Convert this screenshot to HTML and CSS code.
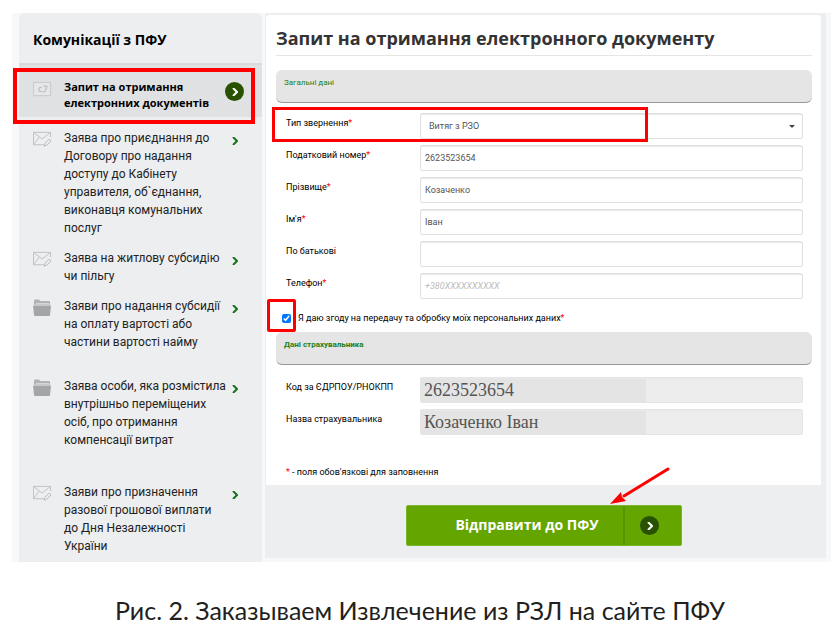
FILE: index.html
```html
<!DOCTYPE html>
<html lang="uk">
<head>
<meta charset="utf-8">
<title>Запит на отримання електронного документу</title>
<link rel="stylesheet" href="styles.css">
</head>
<body>
<svg class="defs" width="0" height="0">
    <symbol id="mail" viewBox="0 0 20 16">
        <path d="M11 13.500H.5V.5h18v5M.5.5l9 7 9-7M.5 13.500l6-8" fill="none" stroke="#bfc1c3"/>
        <path d="M11.500 15l1-3 4.500-4.500 2 2-4.500 4.500z" fill="#edeef0" stroke="#b5b7b9"/>
    </symbol>
    <symbol id="folder" viewBox="0 0 20 18">
        <path d="M1 6V1.500Q1 .5 2 .5h4l2 1.500h9q1 0 1 1V6z" fill="#b1b3b4"/>
        <path d="M3 5h14" stroke="#e1e2e3" fill="none"/>
        <path d="M0 7h19l-1 10q0 1-1 1H2q-1 0-1-1z" fill="#a3a5a6"/>
    </symbol>
    <symbol id="doc" viewBox="0 0 20 16">
        <path d="M.5.5h18v14H.5z" fill="#e6e7e8" stroke="#c6c8ca"/>
        <path d="M9 6Q6 5 6 8q0 3 3 2M11 4.500h4q-1 1-1.500 4-.5 3-3.500 2" fill="none" stroke="#aeb0b2"/>
    </symbol>
    <symbol id="chevron" viewBox="0 0 6 8">
        <path d="M1 0l4 4-4 4" fill="none" stroke="currentColor" stroke-width="2"/>
    </symbol>
</svg>

<div class="page">
    <aside class="sidebar">
        <h2>Комунікації з ПФУ</h2>
        <ul class="menu">
            <li class="active">
                <a href="#"><svg class="icon"><use href="#doc"/></svg><span>Запит на отримання<br>електронних документів</span><i class="round"><svg class="chevron"><use href="#chevron"/></svg></i></a>
                <div class="mark mark-menu"></div>
            </li>
            <li><a href="#"><svg class="icon"><use href="#mail"/></svg><span>Заява про приєднання до<br>Договору про надання<br>доступу до Кабінету<br>управителя, об`єднання,<br>виконавця комунальних<br>послуг</span><svg class="chevron"><use href="#chevron"/></svg></a></li>
            <li><a href="#"><svg class="icon"><use href="#mail"/></svg><span>Заява на житлову субсидію<br>чи пільгу</span><svg class="chevron"><use href="#chevron"/></svg></a></li>
            <li class="wide"><a href="#"><svg class="icon"><use href="#folder"/></svg><span>Заяви про надання субсидії<br>на оплату вартості або<br>частини вартості найму</span><svg class="chevron"><use href="#chevron"/></svg></a></li>
            <li class="wider"><a href="#"><svg class="icon"><use href="#folder"/></svg><span>Заява особи, яка розмістила<br>внутрішньо переміщених<br>осіб, про отримання<br>компенсації витрат</span><svg class="chevron"><use href="#chevron"/></svg></a></li>
            <li><a href="#"><svg class="icon"><use href="#mail"/></svg><span>Заяви про призначення<br>разової грошової виплати<br>до Дня Незалежності<br>України</span><svg class="chevron"><use href="#chevron"/></svg></a></li>
        </ul>
    </aside>

    <form class="main">
        <div class="card">
            <h1>Запит на отримання електронного документу</h1>

            <h3 class="section">Загальні дані</h3>
            <div class="rows">
                <div class="row">
                    <label for="type">Тип звернення<b>*</b></label>
                    <div class="select">
                        <select id="type"><option>Витяг з РЗО</option></select>
                    </div>
                    <div class="mark mark-type"></div>
                </div>
                <div class="row">
                    <label for="tax">Податковий номер<b>*</b></label>
                    <input id="tax" type="text" value="2623523654">
                </div>
                <div class="row">
                    <label for="surname">Прізвище<b>*</b></label>
                    <input id="surname" type="text" value="Козаченко">
                </div>
                <div class="row">
                    <label for="name">Ім'я<b>*</b></label>
                    <input id="name" type="text" value="Іван">
                </div>
                <div class="row">
                    <label for="patronymic">По батькові</label>
                    <input id="patronymic" type="text">
                </div>
                <div class="row">
                    <label for="phone">Телефон<b>*</b></label>
                    <input id="phone" type="tel" placeholder="+380XXXXXXXXXX">
                </div>
            </div>

            <div class="agree">
                <input id="agree" type="checkbox" checked>
                <label for="agree">Я даю згоду на передачу та обробку моїх персональних даних<b>*</b></label>
                <div class="mark mark-agree"></div>
            </div>

            <h3 class="section bold">Дані страхувальника</h3>
            <div class="rows insurer">
                <div class="row">
                    <label for="code">Код за ЄДРПОУ/РНОКПП</label>
                    <input id="code" class="locked" type="text" value="2623523654" readonly>
                </div>
                <div class="row">
                    <label for="insurer">Назва страхувальника</label>
                    <input id="insurer" class="locked" type="text" value="Козаченко Іван" readonly>
                </div>
            </div>

            <p class="note"><b>*</b> - поля обов'язкові для заповнення</p>
        </div>

        <div class="actions">
            <button type="button" class="send">
                <span class="send-text">Відправити до ПФУ</span>
                <span class="send-icon"><i class="round"><svg class="chevron"><use href="#chevron"/></svg></i></span>
            </button>
            <svg class="arrow" viewBox="0 0 60 40">
                <path d="M58 2L14 29" stroke="#f00" stroke-width="3" stroke-linecap="round"/>
                <path d="M0 37l11-12 1 5 4 4z" fill="#f00"/>
            </svg>
        </div>
    </form>
</div>

<p class="caption">Рис. 2. Заказываем Извлечение из РЗЛ на сайте ПФУ</p>
</body>
</html>
```
FILE: styles.css
```css
* {
    box-sizing: border-box;
    margin: 0;
    padding: 0;
}

body {
    background: #fff;
    color: #000;
    font-family: "Open Sans", "Noto Sans", sans-serif;
    font-size: 12px;
}

.defs {
    position: absolute;
}

.page {
    display: flex;
    gap: 3px;
    margin: 13px 9px 0 12px;
    padding: 0 5px 0 7px;
    background: #f6f8fa;
}

/* sidebar */
.sidebar {
    width: 243px;
    flex: none;
    padding-bottom: 7px;
    background: #edeef0;
    border-radius: 6px 6px 0 0;
}

.sidebar h2 {
    height: 52px;
    padding-left: 14px;
    border-bottom: 2px solid #d8dadc;
    font-size: 14px;
    line-height: 54px;
}

.menu {
    list-style: none;
}

.menu li {
    position: relative;
    padding-bottom: 12px;
}

.menu li.wide {
    padding-bottom: 26px;
}

.menu li.wider {
    padding-bottom: 34px;
}

.menu li:last-child {
    padding-bottom: 0;
}

.menu li.active {
    height: 52px;
    margin-bottom: 12px;
    padding: 14px 0 0;
    background: #e0e1e3;
    font-size: 11px;
    font-weight: bold;
}

.menu a {
    display: grid;
    grid-template-columns: 31px 1fr 30px;
    padding-left: 14px;
    color: #222;
    font-family: Roboto, "Open Sans", sans-serif;
    line-height: 18px;
    text-decoration: none;
    white-space: nowrap;
}

.menu .active a {
    color: #000;
    font-family: inherit;
    line-height: 16px;
}

.icon {
    width: 19px;
    height: 17px;
    margin-top: 2px;
}

.chevron {
    width: 6px;
    height: 8px;
}

.menu a > .chevron {
    margin-top: 8px;
    color: #16711c;
}

.round {
    display: flex;
    align-items: center;
    justify-content: center;
    width: 19px;
    height: 19px;
    border-radius: 50%;
    background: #295200;
    color: #fff;
}

.active .round {
    margin: 3px 0 0 -7px;
}

/* red frames over the page */
.mark {
    position: absolute;
    border: 4px solid #f00;
    pointer-events: none;
}

.mark-menu {
    top: 3px;
    right: 7px;
    bottom: -7px;
    left: -6px;
}

.mark-type {
    top: -6px;
    right: 155px;
    bottom: -3px;
    left: -14px;
    border-width: 3px;
}

.mark-agree {
    top: -7px;
    left: -9px;
    width: 29px;
    height: 33px;
    border-width: 3px;
    border-radius: 2px;
}

/* form */
.main {
    flex: 1;
    align-self: flex-start;
    padding-bottom: 12px;
    background: #edeef0;
}

.card {
    margin: 2px 5px 0 1px;
    padding: 0 9px 3px 10px;
    background: #fff;
    border-radius: 4px 4px 0 0;
}

.card h1 {
    height: 41px;
    border-bottom: 1px solid #e6e6e6;
    color: #333;
    font-size: 18px;
    line-height: 47px;
    white-space: nowrap;
}

.section {
    height: 33px;
    padding-left: 8px;
    border-bottom: 1px solid #999;
    border-radius: 6px;
    background: #e5e5e5;
    color: #1a7f1a;
    font-family: Roboto, "Open Sans", sans-serif;
    font-size: 8px;
    font-weight: normal;
    line-height: 26px;
}

.card h1 + .section {
    margin-top: 14px;
}

.section.bold {
    font-weight: bold;
}

.rows {
    display: grid;
    gap: 6px;
    padding: 10px 9px 0 10px;
}

.rows.insurer {
    padding-top: 12px;
}

.row {
    display: grid;
    position: relative;
    grid-template-columns: 134px 1fr;
    height: 26px;
}

.row label,
.agree label,
.note {
    font-family: Roboto, "Open Sans", sans-serif;
    font-size: 9px;
    line-height: 20px;
    white-space: nowrap;
}

.card b {
    color: #f00;
    font-weight: normal;
}

.row input,
.row select {
    width: 100%;
    height: 26px;
    padding: 0 4px;
    border: 1px solid #e0e0e0;
    border-radius: 2px;
    background: #fff;
    box-shadow: inset 0 1px 1px #e8e8e8;
    color: #555;
    font-family: Roboto, "Open Sans", sans-serif;
    font-size: 9px;
}

.row select {
    padding: 0 8px;
    appearance: none;
}

.row input::placeholder {
    color: #bbb;
    font-style: italic;
}

.select {
    position: relative;
}

.select::after {
    content: '';
    position: absolute;
    top: 12px;
    right: 8px;
    border: 3px solid transparent;
    border-top-color: #444;
    border-bottom: 0;
}

.row .locked {
    border-color: #e5e5e5;
    background: linear-gradient(90deg, #e4e4e4 59%, #ededed 59%);
    padding: 0 3px;
    font-family: "Liberation Serif", serif;
    font-size: 18px;
}

.agree {
    display: flex;
    position: relative;
    align-items: center;
    height: 24px;
    margin: 7px 0 2px;
    padding-left: 6px;
    gap: 7px;
}

.agree input {
    width: 9px;
    height: 9px;
    accent-color: #0075ff;
}

.note {
    margin-top: 27px;
    padding-left: 10px;
}

.actions {
    display: flex;
    position: relative;
    justify-content: center;
    padding: 20px 4px 0 0;
}

.send {
    display: flex;
    width: 276px;
    height: 41px;
    border: 1px solid #7ab52a;
    border-radius: 2px;
    background: #64a500;
    color: #fff;
    font-family: inherit;
    font-size: 14px;
    font-weight: bold;
    line-height: 37px;
}

.send-text {
    flex: 1;
    padding-right: 24px;
    text-align: right;
}

.send-icon {
    display: flex;
    align-items: center;
    justify-content: center;
    width: 58px;
    height: 39px;
    border-left: 2px solid #559500;
    padding-right: 6px;
}

.arrow {
    position: absolute;
    top: -18px;
    left: 345px;
    width: 60px;
    height: 40px;
}

.caption {
    margin-top: 28px;
    color: #231f20;
    font-family: Lato, sans-serif;
    font-size: 25px;
    line-height: 40px;
    text-align: center;
}
```
